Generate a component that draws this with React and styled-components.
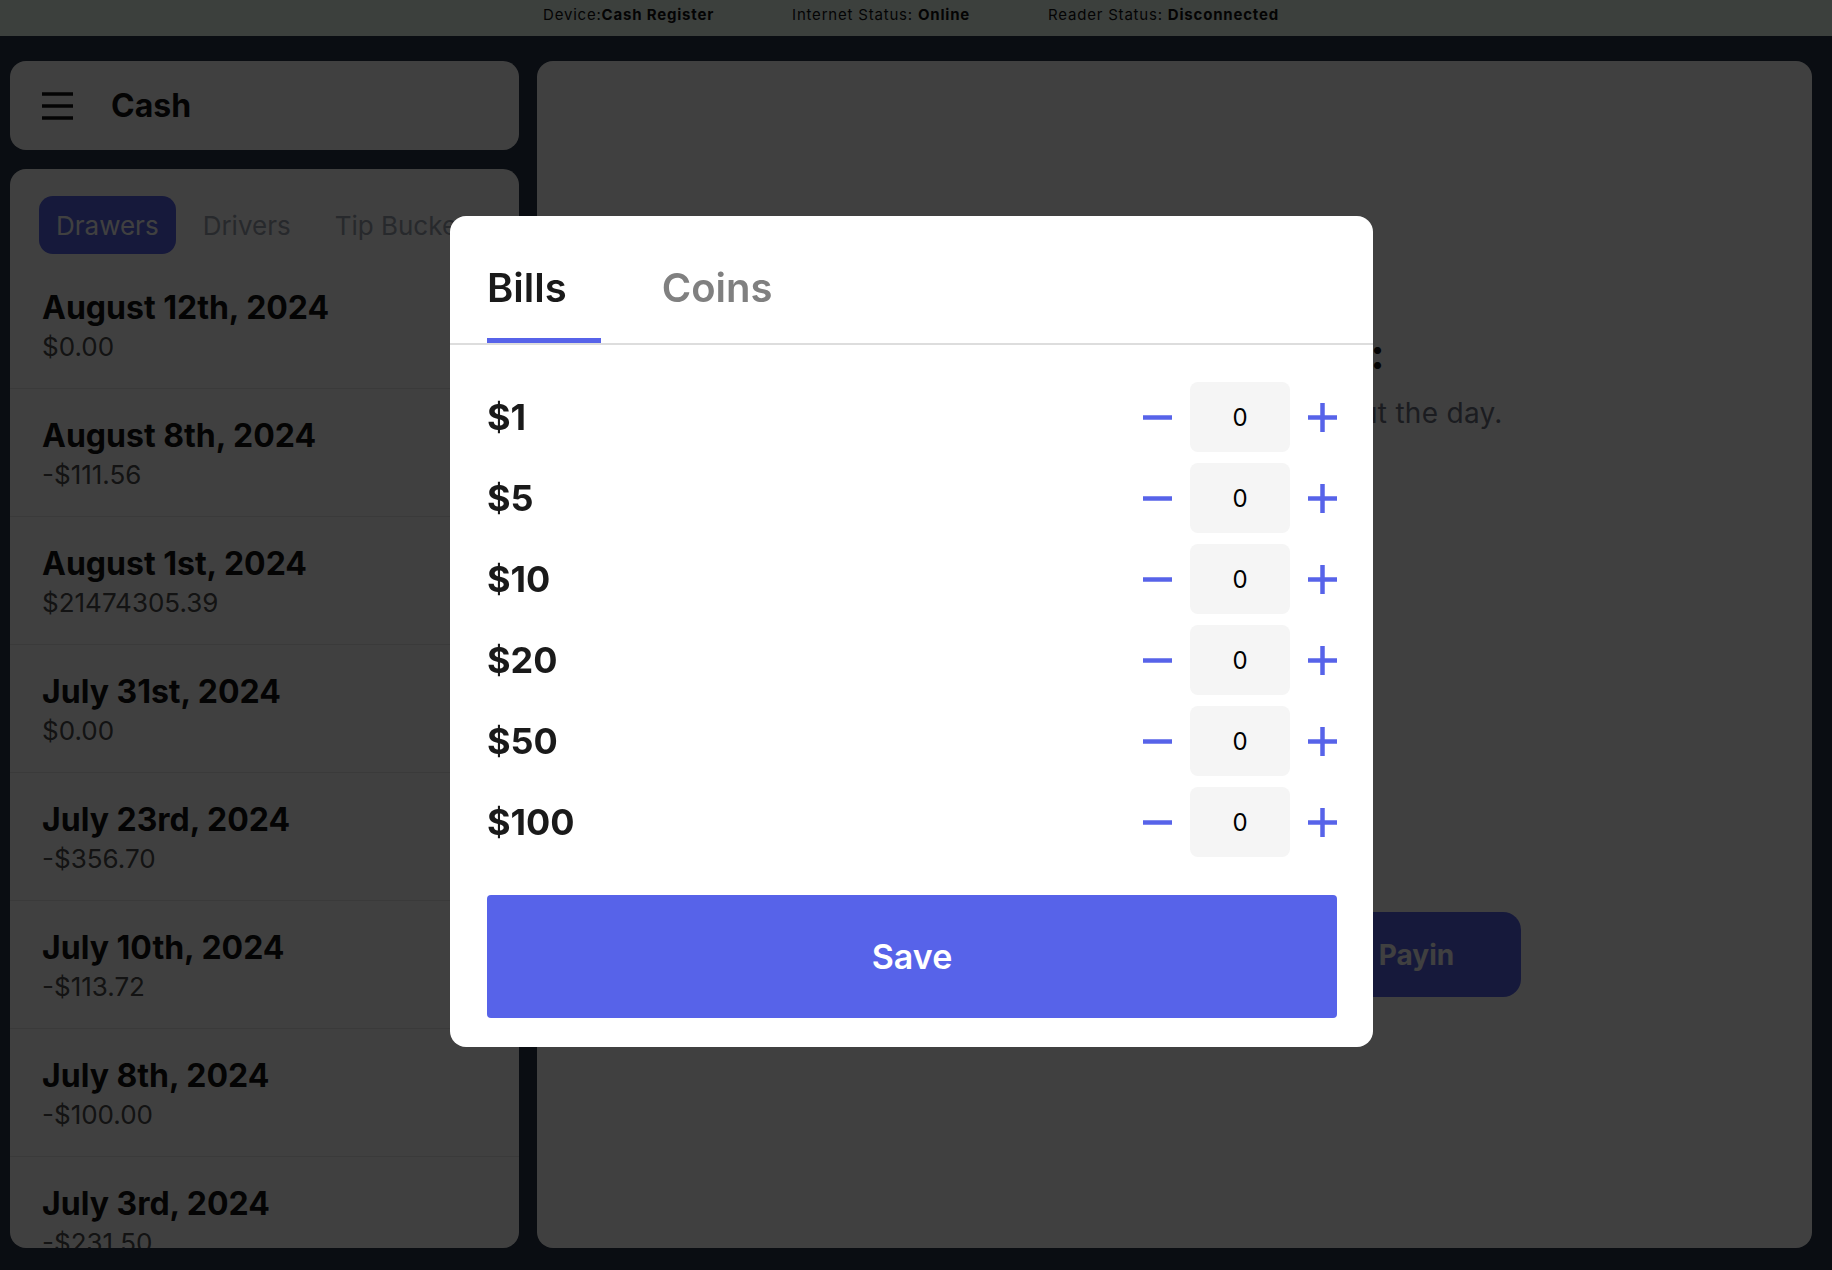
import React from 'react';
import styled, { createGlobalStyle } from 'styled-components';

const GlobalStyle = createGlobalStyle`
  html, body { margin: 0; padding: 0; }
  body {
    background: #283448;
    font-family: Inter, "Noto Sans", "Liberation Sans", sans-serif;
  }
  * { box-sizing: border-box; }
`;

const INDIGO = '#5763e9';

const Page = styled.div`
  height: 100vh;
  display: flex;
  flex-direction: column;
  overflow: hidden;
`;

const StatusBar = styled.header`
  flex: 0 0 36px;
  background: #f0fdf4;
  display: flex;
  justify-content: center;
  gap: 78px;
  padding: 7px 10px 0 0;
  font-size: 15px;
  line-height: 16px;
  letter-spacing: 0.8px;
  color: #111;
`;

const StatusItem = styled.span`
  white-space: nowrap;
  b { font-weight: 700; }
`;

const Main = styled.main`
  flex: 1;
  min-height: 0;
  display: flex;
  gap: 18px;
  padding: 25px 20px 22px 10px;
`;

const LeftColumn = styled.section`
  width: 509px;
  flex: none;
  display: flex;
  flex-direction: column;
  gap: 19px;
  min-height: 0;
`;

const HeaderCard = styled.div`
  flex: 0 0 89px;
  background: #fff;
  border-radius: 16px;
  display: flex;
  align-items: center;
  gap: 37px;
  padding-left: 32px;
`;

const PageTitle = styled.h1`
  margin: 0;
  font-size: 32px;
  font-weight: 700;
  color: #111;
`;

const ListCard = styled.div`
  flex: 1;
  min-height: 0;
  background: #fff;
  border-radius: 16px;
  overflow: hidden;
  display: flex;
  flex-direction: column;
`;

const TabRow = styled.nav`
  flex: none;
  display: flex;
  gap: 10px;
  padding: 27px 29px 7px;
  overflow: hidden;
  white-space: nowrap;
`;

const TabPill = styled.button`
  flex: none;
  height: 58px;
  padding: 0 17px;
  border: none;
  border-radius: 14px;
  font-family: inherit;
  font-size: 26px;
  background: ${(p) => (p.$active ? INDIGO : 'transparent')};
  color: ${(p) => (p.$active ? '#fff' : '#9ca3af')};
`;

const Item = styled.div`
  flex: none;
  padding: 28px 32px 25px;
  border-bottom: 1px solid #e5e5e5;
`;

const ItemTitle = styled.div`
  font-size: 32px;
  line-height: 38px;
  font-weight: 700;
  color: #111;
`;

const ItemAmount = styled.div`
  margin-top: 4px;
  font-size: 26px;
  line-height: 32px;
  color: #4b4b4b;
`;

const RightCard = styled.section`
  flex: 1;
  background: #fff;
  border-radius: 16px;
  display: flex;
  flex-direction: column;
  align-items: center;
  padding-top: 266px;
  text-align: center;
`;

const EmptyHeading = styled.h2`
  margin: 0;
  font-size: 42px;
  line-height: 53px;
  font-weight: 700;
  color: #111;
`;

const EmptyText = styled.p`
  margin: 15px 0 0;
  font-size: 28px;
  line-height: 36px;
  letter-spacing: 0.3px;
  color: #6b7280;
`;

const TotalLine = styled.div`
  margin-top: 372px;
  font-size: 25px;
  line-height: 30px;
  font-weight: 700;
  letter-spacing: 1px;
  color: #2f9fe8;
`;

const ButtonRow = styled.div`
  margin-top: 79px;
  display: flex;
  gap: 34px;
`;

const ActionButton = styled.button`
  width: 208px;
  height: 85px;
  border: none;
  border-radius: 18px;
  background: ${INDIGO};
  color: #fff;
  font-family: inherit;
  font-size: 28px;
  font-weight: 700;
`;

const Overlay = styled.div`
  position: fixed;
  inset: 0;
  background: rgba(0, 0, 0, 0.75);
  display: flex;
  align-items: center;
  justify-content: center;
  padding: 0 9px 7px 0;
`;

const Modal = styled.div`
  width: 923px;
  background: #fff;
  border-radius: 16px;
  overflow: hidden;
`;

const ModalTabs = styled.div`
  display: flex;
  gap: 61px;
  padding: 0 37px;
  border-bottom: 2px solid #dddddd;
`;

const ModalTab = styled.button`
  padding: 48px 34px 26px 0;
  margin: 0;
  background: none;
  border: none;
  border-bottom: 5px solid ${(p) => (p.$active ? INDIGO : 'transparent')};
  font-family: inherit;
  font-size: 40px;
  line-height: 48px;
  font-weight: 600;
  color: ${(p) => (p.$active ? '#1a1a1a' : '#808080')};
`;

const ModalBody = styled.div`
  padding: 37px 36px 29px 37px;
  display: flex;
  flex-direction: column;
`;

const DenomList = styled.div`
  display: flex;
  flex-direction: column;
  gap: 11px;
`;

const DenomRow = styled.div`
  height: 70px;
  display: flex;
  align-items: center;
  justify-content: space-between;
`;

const DenomLabel = styled.span`
  font-size: 36px;
  font-weight: 700;
  color: #1a1a1a;
`;

const Stepper = styled.div`
  display: flex;
  align-items: center;
`;

const IconButton = styled.button`
  width: 29px;
  height: 29px;
  padding: 0;
  border: none;
  background: none;
  display: flex;
`;

const CountBox = styled.div`
  width: 100px;
  height: 70px;
  margin: 0 18px;
  background: #f5f5f5;
  border-radius: 8px;
  display: flex;
  align-items: center;
  justify-content: center;
  font-size: 24px;
  color: #000;
`;

const SaveButton = styled.button`
  margin-top: 38px;
  height: 123px;
  width: 100%;
  border: none;
  border-radius: 4px;
  background: ${INDIGO};
  color: #fff;
  font-family: inherit;
  font-size: 34px;
  font-weight: 600;
`;

const Hamburger = () => (
  <svg width="32" height="28" viewBox="0 0 32 28">
    <g stroke="#111" strokeWidth="3.5">
      <line x1="0" y1="2" x2="31" y2="2" />
      <line x1="0" y1="14" x2="31" y2="14" />
      <line x1="0" y1="26" x2="31" y2="26" />
    </g>
  </svg>
);

const MinusIcon = () => (
  <svg width="29" height="29" viewBox="0 0 29 29">
    <line x1="0" y1="14.5" x2="29" y2="14.5" stroke={INDIGO} strokeWidth="4.5" />
  </svg>
);

const PlusIcon = () => (
  <svg width="29" height="29" viewBox="0 0 29 29">
    <g stroke={INDIGO} strokeWidth="4.5">
      <line x1="0" y1="14.5" x2="29" y2="14.5" />
      <line x1="14.5" y1="0" x2="14.5" y2="29" />
    </g>
  </svg>
);

const drawers = [
  ['August 12th, 2024', '$0.00'],
  ['August 8th, 2024', '-$111.56'],
  ['August 1st, 2024', '$21474305.39'],
  ['July 31st, 2024', '$0.00'],
  ['July 23rd, 2024', '-$356.70'],
  ['July 10th, 2024', '-$113.72'],
  ['July 8th, 2024', '-$100.00'],
  ['July 3rd, 2024', '-$231.50'],
  ['June 28th, 2024', '$0.00'],
];

const bills = ['$1', '$5', '$10', '$20', '$50', '$100'];

export default function App() {
  return (
    <>
      <GlobalStyle />
      <Page>
        <StatusBar>
          <StatusItem>Device:<b>Cash Register</b></StatusItem>
          <StatusItem>Internet Status: <b>Online</b></StatusItem>
          <StatusItem>Reader Status: <b>Disconnected</b></StatusItem>
        </StatusBar>
        <Main>
          <LeftColumn>
            <HeaderCard>
              <Hamburger />
              <PageTitle>Cash</PageTitle>
            </HeaderCard>
            <ListCard>
              <TabRow>
                <TabPill $active>Drawers</TabPill>
                <TabPill>Drivers</TabPill>
                <TabPill>Tip Buckets</TabPill>
              </TabRow>
              {drawers.map(([date, amount]) => (
                <Item key={date}>
                  <ItemTitle>{date}</ItemTitle>
                  <ItemAmount>{amount}</ItemAmount>
                </Item>
              ))}
            </ListCard>
          </LeftColumn>
          <RightCard>
            <EmptyHeading>No Drawer Selected:</EmptyHeading>
            <EmptyText>Select a drawer to see totals throughout the day.</EmptyText>
            <TotalLine>Expected Cash in Drawer: N/A</TotalLine>
            <ButtonRow>
              <ActionButton>Count</ActionButton>
              <ActionButton>Payout</ActionButton>
              <ActionButton>Payin</ActionButton>
            </ButtonRow>
          </RightCard>
        </Main>
      </Page>
      <Overlay>
        <Modal>
          <ModalTabs>
            <ModalTab $active>Bills</ModalTab>
            <ModalTab>Coins</ModalTab>
          </ModalTabs>
          <ModalBody>
            <DenomList>
              {bills.map((b) => (
                <DenomRow key={b}>
                  <DenomLabel>{b}</DenomLabel>
                  <Stepper>
                    <IconButton aria-label="decrease"><MinusIcon /></IconButton>
                    <CountBox>0</CountBox>
                    <IconButton aria-label="increase"><PlusIcon /></IconButton>
                  </Stepper>
                </DenomRow>
              ))}
            </DenomList>
            <SaveButton>Save</SaveButton>
          </ModalBody>
        </Modal>
      </Overlay>
    </>
  );
}
